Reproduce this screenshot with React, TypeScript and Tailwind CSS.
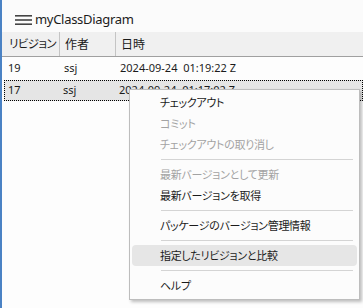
import React from "react";

type MenuEntry = { label: string; disabled?: boolean; active?: boolean } | "sep";

const menu: MenuEntry[] = [
  { label: "チェックアウト" },
  { label: "コミット", disabled: true },
  { label: "チェックアウトの取り消し", disabled: true },
  "sep",
  { label: "最新バージョンとして更新", disabled: true },
  { label: "最新バージョンを取得" },
  "sep",
  { label: "パッケージのバージョン管理情報" },
  "sep",
  { label: "指定したリビジョンと比較", active: true },
  "sep",
  { label: "ヘルプ" },
];

const rows = [
  { rev: "19", author: "ssj", date: "2024-09-24  01:19:22 Z" },
  { rev: "17", author: "ssj", date: "2024-09-24  01:17:02 Z", selected: true },
];

const App = () => {
  return (
    <div className="relative w-[363px] h-[308px] overflow-hidden bg-[#fdfdfd] border-l-2 border-[#4a82c4] text-[#1b1b1b] font-['Noto_Sans','Noto_Sans_CJK_JP',sans-serif]">
      {/* Title */}
      <div className="h-[32px] pt-[8px] flex items-center pl-[13px] gap-[3px] bg-[#fbfbfb]">
        <svg width="17" height="10" viewBox="0 0 17 10" className="text-[#444]">
          <rect x="0" y="0" width="17" height="1.6" fill="currentColor" />
          <rect x="0" y="4.2" width="17" height="1.6" fill="currentColor" />
          <rect x="0" y="8.4" width="17" height="1.6" fill="currentColor" />
        </svg>
        <span className="text-[13px] tracking-[-0.3px] leading-none pb-[1px]">myClassDiagram</span>
      </div>

      {/* Header */}
      <div className="h-[25px] flex bg-[#f0f0f0] border-b border-[#a0a0a0] text-[11.5px] whitespace-nowrap font-['Noto_Sans_CJK_JP',sans-serif] [font-feature-settings:'palt'] tracking-[-0.6px]">
        <div className="w-[58px] pl-[7px] flex items-center border-r border-[#c4c4c4] pb-[1px]">リビジョン</div>
        <div className="w-[56px] pl-[5px] flex items-center border-r border-[#c4c4c4] pb-[1px] tracking-normal text-[12px]">作者</div>
        <div className="flex-1 pl-[5px] flex items-center pb-[1px] tracking-normal text-[12px]">日時</div>
      </div>

      {/* Rows */}
      <div className="text-[11px] whitespace-pre">
        {rows.map((r) =>
          r.selected ? (
            <div key={r.rev} className="h-[21px] ml-[2px] flex items-center bg-[#e5e5e5] border border-dotted border-black">
              <div className="w-[55px] pl-[3px]">{r.rev}</div>
              <div className="w-[56px] pl-[3px]">{r.author}</div>
              <div className="flex-1 pl-[3px]">{r.date}</div>
            </div>
          ) : (
            <div key={r.rev} className="h-[23px] flex items-center">
              <div className="w-[59px] pl-[6px]">{r.rev}</div>
              <div className="w-[56px] pl-[3px]">{r.author}</div>
              <div className="flex-1 pl-[3px]">{r.date}</div>
            </div>
          )
        )}
      </div>

      {/* Context menu */}
      <div className="absolute left-[127px] top-[89px] w-[231px] bg-[#fcfcfc] border border-[#bdbdbd] shadow-[2px_2px_3px_rgba(0,0,0,0.25)] pt-[2px] pb-[3px] px-[2px] text-[11px] tracking-[-0.3px] whitespace-nowrap font-['Noto_Sans_CJK_JP',sans-serif] [font-feature-settings:'palt']">
        {menu.map((m, i) =>
          m === "sep" ? (
            <div key={i} className="h-[9px] flex items-center pl-[29px] pr-[4px]">
              <div className="h-px w-full bg-[#d4d4d4]" />
            </div>
          ) : (
            <div
              key={i}
              className={`h-[21px] flex items-center pl-[28px] rounded-[4px] ${
                m.active ? "bg-[#e6e6e6]" : ""
              } ${m.disabled ? "text-[#a3a3a3]" : "text-[#1b1b1b]"}`}
            >
              {m.label}
            </div>
          )
        )}
      </div>
    </div>
  );
};

export default App;
